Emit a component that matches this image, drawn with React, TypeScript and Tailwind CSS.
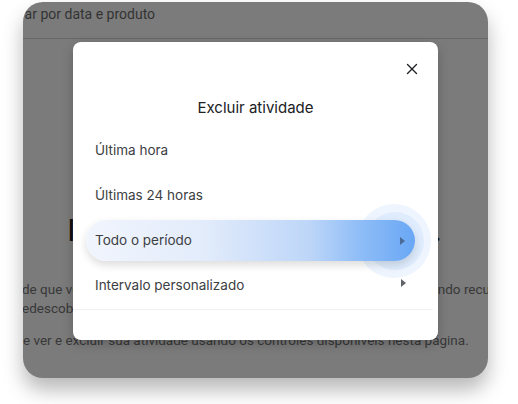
import { X } from "lucide-react";

const options = [
  { label: "Última hora", chevron: false },
  { label: "Últimas 24 horas", chevron: false },
  { label: "Todo o período", chevron: true, active: true },
  { label: "Intervalo personalizado", chevron: true },
];

function Caret({ className }: { className?: string }) {
  return (
    <svg viewBox="0 0 5 8" className={className} width="5" height="8">
      <path d="M0 0 L5 4 L0 8 Z" fill="currentColor" />
    </svg>
  );
}

export default function App() {
  return (
    <div className="w-[518px] h-[404px] bg-white pt-[2px] pl-[23px] font-['Roboto',sans-serif]">
      <div className="relative w-[465px] h-[376px] rounded-[20px] bg-[#7b7b7b] overflow-hidden shadow-[0_12px_20px_rgba(0,0,0,0.28)]">
        {/* page behind the scrim */}
        <div className="h-[37px] pt-[2px] border-b border-[#686868] text-[14px] leading-[20px] text-[#333] whitespace-nowrap">
          <span className="-ml-[22px]">Filtrar por data e produto</span>
        </div>
        <div className="mt-[171px] flex justify-between pl-[44px] pr-[46px] text-[32px] leading-[40px] font-normal text-[#111]">
          <span>I</span>
          <span>.</span>
        </div>
        <div className="mt-[30px] text-[13.5px] leading-[19px] text-[#383838] whitespace-nowrap">
          <div className="flex justify-between">
            <span className="-ml-[1px]">de que você pesquisou</span>
            <span className="-mr-[2px]">ndo recu</span>
          </div>
          <div>
            <span className="-ml-[1px]">edescobrir</span>
          </div>
          <div className="mt-[13px]">
            <span>e ver e excluir sua atividade usando os controles disponíveis nesta página.</span>
          </div>
        </div>

        {/* dialog */}
        <div className="absolute left-[50px] top-[40px] w-[365px] h-[298px] rounded-[8px] bg-white shadow-[0_4px_12px_rgba(0,0,0,0.2)] font-['Inter',sans-serif]">
          <div className="flex justify-end pt-[18px] pr-[17px]">
            <X className="w-[18px] h-[18px] text-[#202124]" strokeWidth={1.8} />
          </div>
          <h2 className="mt-[18px] text-center text-[15px] leading-[24px] text-[#202124]">Excluir atividade</h2>
          <ul className="mt-[8px]">
            {options.map((o) =>
              o.active ? (
                <li key={o.label} className="relative ml-[13px] mr-[23px] my-[2px] h-[41px] flex items-center">
                  <div className="absolute right-[-16px] top-1/2 -translate-y-1/2 w-[74px] h-[74px] rounded-full bg-[#5b9af3]/10" />
                  <div className="absolute right-[-9px] top-1/2 -translate-y-1/2 w-[58px] h-[58px] rounded-full bg-[#5b9af3]/10" />
                  <div className="relative flex items-center w-full h-full rounded-full pl-[9px] pr-[10px] bg-[linear-gradient(90deg,#f1f5fd_0%,#e3ecfb_35%,#bdd6f8_68%,#8dbcf7_84%,#69a7f5_100%)] shadow-[0_4px_8px_rgba(0,0,0,0.14)]">
                    <span className="flex-1 text-[13.5px] text-[#3c4043]">{o.label}</span>
                    <Caret className="text-[#4b6a95]" />
                  </div>
                </li>
              ) : (
                <li key={o.label} className="h-[45px] flex items-center pl-[22px] pr-[32px]">
                  <span className="flex-1 text-[13.5px] text-[#3c4043]">{o.label}</span>
                  {o.chevron && <Caret className="text-[#5f6368] -mt-[6px]" />}
                </li>
              )
            )}
          </ul>
          <div className="mt-[1px] mr-[5px] border-t border-[#f1f1f1]" />
        </div>
      </div>
    </div>
  );
}
